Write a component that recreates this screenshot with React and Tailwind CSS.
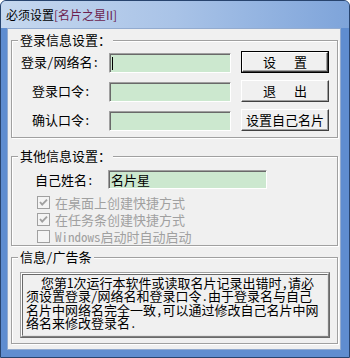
import React from 'react';

function Field({ className, children }) {
    return (
        <div className={`flex items-center border border-t-[#a0a0a0] border-l-[#a0a0a0] border-r-white border-b-white bg-[#cce8cf] shadow-[inset_1px_1px_0_#696969] ${className}`}>
            {children}
        </div>
    );
}

function Btn({ isDefault, children }) {
    const face = (
        <div className="flex h-full w-full items-center justify-center border border-t-white border-l-white border-r-[#404040] border-b-[#404040] bg-[#f0f0f0] shadow-[inset_-1px_-1px_0_#a0a0a0]">
            {children}
        </div>
    );
    if (isDefault) {
        return <div className="h-[22px] w-[88px] border border-black">{face}</div>;
    }
    return <div className="h-[22px] w-[88px]">{face}</div>;
}

function Group({ title, className, children }) {
    return (
        <fieldset className={`ml-[3px] w-[327px] border border-[#a0a0a0] shadow-[inset_1px_1px_0_#fff,1px_1px_0_#fff] ${className}`}>
            <legend className="ml-[6px] bg-[#f0f0f0] px-[2px] text-[13px] leading-[16px]">{title}</legend>
            {children}
        </fieldset>
    );
}

function Check({ checked, children }) {
    return (
        <div className="flex h-[17px] items-center gap-[5px] pl-[25px]">
            <svg width="13" height="13" viewBox="0 0 13 13">
                <rect x="0.5" y="0.5" width="12" height="12" fill="#f4f4f4" stroke="#a0a0a0" />
                {checked && <polyline points="3,6 5.2,8.6 10,3.6" fill="none" stroke="#a0a0a0" strokeWidth="1.9" />}
            </svg>
            <span className="text-[13px] leading-[16px] text-[#a0a0a0]">{children}</span>
        </div>
    );
}

export default function App() {
    return (
        <div className="h-[358px] w-[350px] overflow-hidden rounded-t-[6px] border border-[#28446e] bg-[#5f8dd0] font-['Noto_Sans_Mono_CJK_SC','Noto_Sans_CJK_SC',sans-serif] text-black">
            {/* title bar */}
            <div className="flex h-[27px] items-center bg-gradient-to-r from-[#c6d8ef] via-[#a9c3e7] to-[#7ea4da] pl-[5px] font-['Noto_Sans_CJK_SC',sans-serif] text-[12px]">
                <span>必须设置</span>
                <span className="text-[#6d1f4f]">[名片之星II]</span>
            </div>

            <div className="flex pl-[6px]">
                <div className="h-[322px] w-[334px] border border-[#93abcf] bg-[#f0f0f0]">
                    <Group title="登录信息设置：" className="mt-[3px] h-[106px]">
                        <div className="flex flex-col gap-[6px] pt-[3px] text-[13px]">
                            <div className="flex h-[23px] items-start">
                                <div className="w-[97px] pl-[9px] pt-[3px] leading-[16px]">登录/网络名:</div>
                                <Field className="mt-[2px] h-[20px] w-[122px]">
                                    <div className="ml-[2px] h-[13px] w-px bg-black"></div>
                                </Field>
                                <div className="ml-[10px]"><Btn isDefault><span>设</span><span className="ml-[18px]">置</span></Btn></div>
                            </div>
                            <div className="flex h-[23px] items-start">
                                <div className="w-[97px] pl-[20px] pt-[3px] leading-[16px]">登录口令:</div>
                                <Field className="mt-[2px] h-[20px] w-[122px]" />
                                <div className="ml-[10px]"><Btn><span>退</span><span className="ml-[18px]">出</span></Btn></div>
                            </div>
                            <div className="flex h-[23px] items-start">
                                <div className="w-[97px] pl-[20px] pt-[3px] leading-[16px]">确认口令:</div>
                                <Field className="mt-[2px] h-[20px] w-[122px]" />
                                <div className="ml-[10px]"><Btn>设置自己名片</Btn></div>
                            </div>
                        </div>
                    </Group>

                    <Group title="其他信息设置：" className="mt-[10px] h-[98px]">
                        <div className="flex h-[19px] items-center pt-0 text-[13px] mt-[6px]">
                            <div className="w-[96px] pl-[23px] leading-[16px]">自己姓名:</div>
                            <Field className="h-[19px] w-[159px]">
                                <span className="pl-[2px] leading-[15px]">名片星</span>
                            </Field>
                        </div>
                        <div className="mt-[5px]">
                            <Check checked>在桌面上创建快捷方式</Check>
                            <Check checked>在任务条创建快捷方式</Check>
                            <Check>Windows启动时自动启动</Check>
                        </div>
                    </Group>

                    <Group title="信息/广告条" className="mt-[3px] h-[95px]">
                        <div className="ml-[8px] mt-[7px] h-[66px] w-[310px] border border-t-[#a0a0a0] border-l-[#a0a0a0] border-r-[#696969] border-b-[#696969]">
                            <div className="h-full border border-t-white border-l-white border-r-[#808080] border-b-[#808080]">
                                <div className="h-full border border-t-[#696969] border-l-[#696969] border-r-[#e3e3e3] border-b-[#e3e3e3] bg-[#f0f0f0] pl-[3px] pt-[1px] text-[13px] leading-[13.3px] whitespace-nowrap">
                                    <div className="pl-[15px]">您第1次运行本软件或读取名片记录出错时,请必</div>
                                    <div>须设置登录/网络名和登录口令.由于登录名与自己</div>
                                    <div>名片中网络名完全一致,可以通过修改自己名片中网</div>
                                    <div>络名来修改登录名.</div>
                                </div>
                            </div>
                        </div>
                    </Group>
                </div>
            </div>
        </div>
    );
}
